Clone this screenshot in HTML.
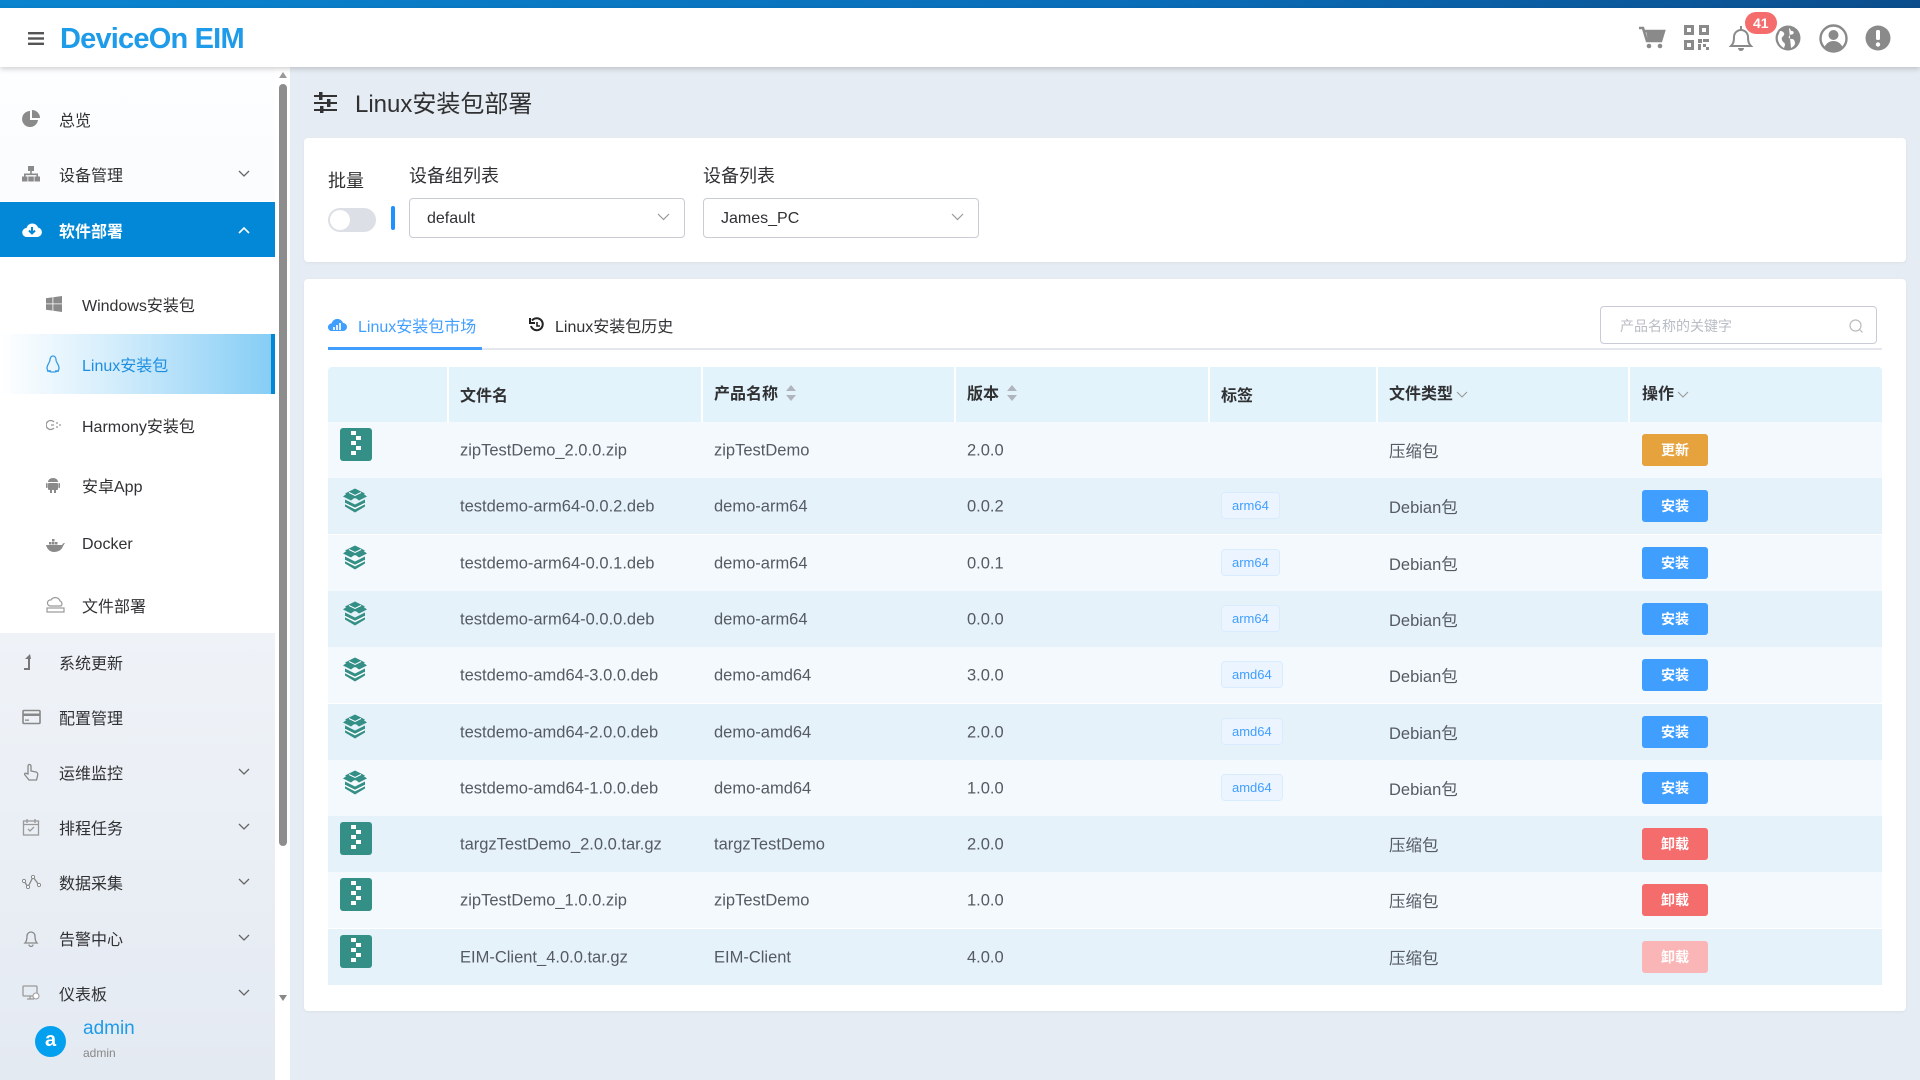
<!DOCTYPE html>
<html><head><meta charset="utf-8">
<style>
*{margin:0;padding:0;box-sizing:border-box}
body{width:1920px;height:1080px;overflow:hidden;background:#e6ecf3;font-family:"Liberation Sans","Noto Sans CJK SC",sans-serif;color:#303133;position:relative}
.a{position:absolute}
.topstrip{left:0;top:0;width:1920px;height:8px;background:linear-gradient(90deg,#0a84cf,#0a6db8 60%,#0b4d8c)}
.header{left:0;top:8px;width:1920px;height:59px;background:#fff;box-shadow:0 2px 5px rgba(0,0,0,.18);z-index:3}
.logo{left:60px;top:15px;font-size:29px;font-weight:bold;color:#1e9be9;letter-spacing:-0.8px}
.side{left:0;top:67px;width:275px;height:1013px;background:linear-gradient(180deg,#fdfeff,#e4eaf2)}
.mi{position:absolute;left:0;width:275px;height:55px;font-size:16px;color:#303133}
.mi span{position:absolute;left:59px;top:50%;transform:translateY(-50%)}
.mi svg.ic{position:absolute;left:22px;top:50%;transform:translateY(-50%)}
.mi .chev{position:absolute;left:238px;top:50%;transform:translateY(-50%)}
.sub span{left:82px}
.sub svg.ic{left:46px}
.card{background:#fff;border-radius:4px;box-shadow:0 1px 3px rgba(0,0,0,.05)}
.sel{border:1px solid #c9ccd3;border-radius:4px;height:40px;background:#fff;font-size:16px;color:#303133}
.sel span{position:absolute;left:17px;top:11px}
.sel svg{position:absolute;right:14px;top:14px}
.row{position:absolute;left:328px;width:1554px;height:56px;font-size:16.5px;color:#555a63}
.row .c{position:absolute;top:50%;transform:translateY(-50%)}
.tag{position:absolute;left:893px;top:14px;height:27px;padding:0 10px;line-height:25px;font-size:13px;color:#409eff;background:#ecf5ff;border:1px solid #d9ecff;border-radius:4px}
.btn{position:absolute;left:1314px;top:12px;width:66px;height:32px;border-radius:3px;color:#fff;font-size:14px;font-weight:bold;text-align:center;line-height:32px}
.th{position:absolute;top:0;height:55px;line-height:55px;font-weight:bold;font-size:16px;color:#303133}
</style></head><body>
<div class="a topstrip"></div>
<div class="a header">
  <svg class="a" style="left:28px;top:24px" width="16" height="13"><rect y="0" width="16" height="2.4" fill="#555"/><rect y="5.3" width="16" height="2.4" fill="#555"/><rect y="10.6" width="16" height="2.4" fill="#555"/></svg>
  <div class="a logo">DeviceOn EIM</div>
  <svg class="a" style="left:1638px;top:17px" width="28" height="26" viewBox="0 0 28 26"><path d="M1 3h4l4 13h14l3-10H7" fill="none" stroke="#8a8a8a" stroke-width="2.6"/><path d="M8 6h18l-3 10H10z" fill="#8a8a8a"/><circle cx="11" cy="21" r="2.3" fill="#8a8a8a"/><circle cx="22" cy="21" r="2.3" fill="#8a8a8a"/></svg>
  <svg class="a" style="left:1684px;top:17px" width="25" height="25" viewBox="0 0 25 25" fill="#8a8a8a"><path d="M0 0h10v10H0zM3 3v4h4V3zM15 0h10v10H15zM18 3v4h4V3zM0 15h10v10H0zM3 18v4h4v-4zM14 14h4v4h-4zM19 14h6v3h-6zM14 19h3v6h-3zM19 19h3v3h-3zM22 22h3v3h-3z"/></svg>
  <svg class="a" style="left:1727px;top:15px" width="28" height="30" viewBox="0 0 28 30"><path d="M4 23c2-2 3-4 3-9a7 7 0 0 1 14 0c0 5 1 7 3 9z" fill="none" stroke="#8a8a8a" stroke-width="2"/><path d="M11 25a3 3 0 0 0 6 0z" fill="#8a8a8a"/><rect x="13" y="3" width="2" height="4" fill="#8a8a8a"/></svg>
  <div class="a" style="left:1745px;top:4px;height:22px;padding:0 8px;border-radius:11px;background:#f56c6c;color:#fff;font-size:14px;font-weight:bold;line-height:22px">41</div>
  <svg class="a" style="left:1775px;top:17px" width="26" height="26" viewBox="0 0 26 26"><circle cx="13" cy="13" r="12.5" fill="#8a8a8a"/><path d="M5 6c3 0 5 2 4 4s-3 2-2 5 3 2 3 5l-1 3C5 21 2 16 3 11zM14 3c2 1 1 3 3 3s2 2 1 3-3 0-4 2 1 3 3 3 3 2 3 5c-1 2-2 3-4 4" fill="#fff"/></svg>
  <svg class="a" style="left:1819px;top:16px" width="29" height="29" viewBox="0 0 29 29"><circle cx="14.5" cy="14.5" r="13" fill="none" stroke="#8a8a8a" stroke-width="2.4"/><circle cx="14.5" cy="11" r="5" fill="#8a8a8a"/><path d="M5.5 23c2-4 5-6 9-6s7 2 9 6c-2 2-5 3.5-9 3.5s-7-1.5-9-3.5z" fill="#8a8a8a"/></svg>
  <svg class="a" style="left:1865px;top:17px" width="26" height="26" viewBox="0 0 26 26"><circle cx="13" cy="13" r="12.5" fill="#8a8a8a"/><rect x="11" y="5" width="4" height="10" rx="1.5" fill="#fff"/><circle cx="13" cy="19.5" r="2.2" fill="#fff"/></svg>
</div>

<div class="a side">
  <div style="position:absolute;left:0;top:134px;width:275px;height:432px;background:#fff"></div>
</div>
<div class="a" style="left:0;top:67px;width:275px;height:1013px">
  <div class="mi" style="top:24px"><svg class="ic" width="18" height="18" viewBox="0 0 18 18"><path d="M8 1a8 8 0 1 0 8 9H8z" fill="#8a8a8a"/><path d="M10 0v8h8a8 8 0 0 0-8-8z" fill="#8a8a8a"/></svg><span>总览</span></div>
  <div class="mi" style="top:79px"><svg class="ic" width="18" height="16" viewBox="0 0 18 16" fill="#8a8a8a"><rect x="6" y="0" width="6" height="5"/><rect x="8.2" y="5" width="1.6" height="3"/><rect x="2" y="7.5" width="14" height="1.6"/><rect x="2" y="7.5" width="1.6" height="3"/><rect x="14.4" y="7.5" width="1.6" height="3"/><rect x="0" y="10.5" width="5.5" height="5"/><rect x="6.3" y="10.5" width="5.5" height="5"/><rect x="12.5" y="10.5" width="5.5" height="5"/></svg><span>设备管理</span><svg class="chev" width="12" height="8"><path d="M1 1l5 5 5-5" fill="none" stroke="#666" stroke-width="1.3"/></svg></div>
  <div class="mi" style="top:135px;background:#0288d6;color:#fff;font-weight:bold"><svg class="ic" width="20" height="16" viewBox="0 0 20 16"><path d="M5 15a4.5 4.5 0 0 1-.5-9A6 6 0 0 1 16 5.5 4.8 4.8 0 0 1 15.5 15z" fill="#fff"/><path d="M10 5v6M7 8.5l3 3 3-3" stroke="#0288d6" stroke-width="2" fill="none"/></svg><span>软件部署</span><svg class="chev" width="12" height="8"><path d="M1 7l5-5 5 5" fill="none" stroke="#fff" stroke-width="1.6"/></svg></div>
  <div class="mi sub" style="top:209px"><svg class="ic" width="16" height="16" viewBox="0 0 16 16" fill="#8a8a8a"><path d="M0 2.2l6.5-.9v6.2H0zM7.3 1.2L16 0v7.5H7.3zM0 8.3h6.5v6.3L0 13.7zM7.3 8.3H16V16l-8.7-1.2z"/></svg><span>Windows安装包</span></div>
  <div class="mi sub" style="top:267px;height:60px;background:linear-gradient(90deg,#fff 0%,#d6eefc 40%,#86cdf5 100%);color:#1e8fe0;border-right:4px solid #0288d6"><svg class="ic" width="14" height="18" viewBox="0 0 14 18"><path d="M7 1c-2 0-3 2-3 4 0 2-3 5-3 8 0 3 2 4 6 4s6-1 6-4c0-3-3-6-3-8 0-2-1-4-3-4z" fill="none" stroke="#3a9be3" stroke-width="1.3"/><path d="M1 16h4M9 16h4" stroke="#3a9be3" stroke-width="1.5"/></svg><span>Linux安装包</span></div>
  <div class="mi sub" style="top:330px"><svg class="ic" width="16" height="12" viewBox="0 0 16 12"><path d="M8 3a4.5 4.5 0 1 0 0 6" fill="none" stroke="#999" stroke-width="1.3"/><path d="M5 6h3M10 4h2M10 8h2M13 6h2" stroke="#999" stroke-width="1.3"/></svg><span>Harmony安装包</span></div>
  <div class="mi sub" style="top:390px"><svg class="ic" width="14" height="16" viewBox="0 0 14 16" fill="#8a8a8a"><path d="M2 5a5 4 0 0 1 10 0z"/><rect x="2" y="6" width="10" height="7" rx="1"/><rect x="0" y="6" width="1.6" height="5" rx=".8"/><rect x="12.4" y="6" width="1.6" height="5" rx=".8"/><rect x="4" y="12" width="2" height="4"/><rect x="8" y="12" width="2" height="4"/></svg><span>安卓App</span></div>
  <div class="mi sub" style="top:450px"><svg class="ic" width="19" height="14" viewBox="0 0 19 14" fill="#8a8a8a"><path d="M0 7h16c1-2 2-2 3-2-1 1-1 2-2 3-1 4-5 6-9 6S1 11 0 7z"/><rect x="3" y="4" width="2.5" height="2.5"/><rect x="6" y="4" width="2.5" height="2.5"/><rect x="9" y="4" width="2.5" height="2.5"/><rect x="6" y="1" width="2.5" height="2.5"/></svg><span>Docker</span></div>
  <div class="mi sub" style="top:510px"><svg class="ic" width="19" height="16" viewBox="0 0 19 16"><path d="M4 9a3 3 0 0 1 1-6 5 5 0 0 1 9 1 3 3 0 0 1 1 5z" fill="none" stroke="#999" stroke-width="1.2"/><rect x="1" y="11" width="17" height="4" fill="none" stroke="#999" stroke-width="1.2"/></svg><span>文件部署</span></div>
  <div class="mi" style="top:567px"><svg class="ic" width="18" height="16" viewBox="0 0 18 16"><path d="M6 16V5H3l5-5 1 5H8v11z" fill="#777"/><rect x="2" y="14" width="6" height="2" fill="#777"/></svg><span>系统更新</span></div>
  <div class="mi" style="top:622px"><svg class="ic" width="19" height="15" viewBox="0 0 19 15"><rect x="1" y="1" width="17" height="13" rx="1" fill="none" stroke="#888" stroke-width="1.6"/><rect x="1" y="4" width="17" height="2.5" fill="#888"/><rect x="3" y="10" width="4" height="1.3" fill="#888"/></svg><span>配置管理</span></div>
  <div class="mi" style="top:677px"><svg class="ic" width="18" height="18" viewBox="0 0 18 18"><path d="M6 11V3a1.5 1.5 0 0 1 3 0v5l5 1c2 .5 2 2 1.5 4l-1 4H7l-4-5c-1-1 0-2.5 1.5-1.5z" fill="none" stroke="#888" stroke-width="1.3"/></svg><span>运维监控</span><svg class="chev" width="12" height="8"><path d="M1 1l5 5 5-5" fill="none" stroke="#666" stroke-width="1.3"/></svg></div>
  <div class="mi" style="top:732px"><svg class="ic" width="18" height="18" viewBox="0 0 18 18"><rect x="1.5" y="3" width="15" height="14" fill="none" stroke="#999" stroke-width="1.3"/><path d="M1.5 6.5h15M5 1v4M13 1v4M6 11l2 2 4-4" fill="none" stroke="#999" stroke-width="1.3"/></svg><span>排程任务</span><svg class="chev" width="12" height="8"><path d="M1 1l5 5 5-5" fill="none" stroke="#666" stroke-width="1.3"/></svg></div>
  <div class="mi" style="top:787px"><svg class="ic" width="19" height="14" viewBox="0 0 19 14"><path d="M2 6l4 6 5-10 6 8" fill="none" stroke="#888" stroke-width="1.3"/><circle cx="2" cy="6" r="1.6" fill="#fff" stroke="#888"/><circle cx="6" cy="12" r="1.6" fill="#fff" stroke="#888"/><circle cx="11" cy="2" r="1.6" fill="#fff" stroke="#888"/><circle cx="17" cy="10" r="1.6" fill="#fff" stroke="#888"/></svg><span>数据采集</span><svg class="chev" width="12" height="8"><path d="M1 1l5 5 5-5" fill="none" stroke="#666" stroke-width="1.3"/></svg></div>
  <div class="mi" style="top:843px"><svg class="ic" width="18" height="18" viewBox="0 0 18 18"><path d="M3 14c1.5-1.5 2-3 2-7a4 4 0 0 1 8 0c0 4 .5 5.5 2 7z" fill="none" stroke="#888" stroke-width="1.3"/><path d="M7 15.5a2 2 0 0 0 4 0" fill="none" stroke="#888" stroke-width="1.3"/></svg><span>告警中心</span><svg class="chev" width="12" height="8"><path d="M1 1l5 5 5-5" fill="none" stroke="#666" stroke-width="1.3"/></svg></div>
  <div class="mi" style="top:898px"><svg class="ic" width="18" height="16" viewBox="0 0 18 16"><rect x="1" y="1" width="14" height="10" rx="1" fill="none" stroke="#999" stroke-width="1.3"/><path d="M5 14h7M8 11v3" stroke="#999" stroke-width="1.3"/><circle cx="14" cy="11" r="3" fill="#fff" stroke="#999"/></svg><span>仪表板</span><svg class="chev" width="12" height="8"><path d="M1 1l5 5 5-5" fill="none" stroke="#666" stroke-width="1.3"/></svg></div>
  <div class="a" style="left:35px;top:959px;width:31px;height:31px;border-radius:50%;background:#03a0ef;color:#fff;font-size:20px;font-weight:bold;text-align:center;line-height:29px">a</div>
  <div class="a" style="left:83px;top:951px;font-size:19px;color:#1e9be9">admin</div>
  <div class="a" style="left:83px;top:979px;font-size:12px;color:#888">admin</div>
</div>
<div class="a" style="left:275px;top:67px;width:15px;height:1013px;background:#fff"></div>
<div class="a" style="left:279px;top:84px;width:8px;height:762px;border-radius:4px;background:#8d8d8d"></div>
<svg class="a" style="left:279px;top:72px" width="8" height="6"><path d="M0 6L4 0l4 6z" fill="#999"/></svg>
<svg class="a" style="left:279px;top:995px" width="8" height="6"><path d="M0 0l4 6 4-6z" fill="#888"/></svg>

<svg class="a" style="left:314px;top:92px" width="23" height="21" viewBox="0 0 23 21" fill="#333"><rect y="3" width="23" height="2"/><rect y="10" width="23" height="2"/><rect y="17" width="23" height="2"/><rect x="5" y="0" width="3.5" height="8"/><rect x="13" y="7" width="3.5" height="8"/><rect x="6" y="14" width="3.5" height="7"/></svg>
<div class="a" style="left:355px;top:84px;font-size:24px;color:#303133">Linux安装包部署</div>

<div class="a card" style="left:304px;top:138px;width:1602px;height:124px"></div>
<div class="a" style="left:328px;top:167px;font-size:18px">批量</div>
<div class="a" style="left:409px;top:162px;font-size:18px">设备组列表</div>
<div class="a" style="left:703px;top:162px;font-size:18px">设备列表</div>
<div class="a" style="left:328px;top:208px;width:48px;height:24px;border-radius:12px;background:#dcdfe6"><div style="position:absolute;left:2px;top:2px;width:20px;height:20px;border-radius:50%;background:#fff"></div></div>
<div class="a" style="left:391px;top:206px;width:4px;height:24px;background:#1e90ff;border-radius:2px"></div>
<div class="a sel" style="left:409px;top:198px;width:276px"><span>default</span><svg width="13" height="8"><path d="M1 1l5.5 5.5L12 1" fill="none" stroke="#999" stroke-width="1.2"/></svg></div>
<div class="a sel" style="left:703px;top:198px;width:276px"><span>James_PC</span><svg width="13" height="8"><path d="M1 1l5.5 5.5L12 1" fill="none" stroke="#999" stroke-width="1.2"/></svg></div>

<div class="a card" style="left:304px;top:279px;width:1602px;height:732px"></div>
<svg class="a" style="left:328px;top:316px" width="19" height="16" viewBox="0 0 19 16"><path d="M4 15a3.8 3.8 0 0 1-.5-7.6A6 6 0 0 1 15 7a4 4 0 0 1 0 8z" fill="#409eff"/><path d="M6 14v-3M9 14V9M12 14V7" stroke="#fff" stroke-width="1.7"/></svg>
<div class="a" style="left:358px;top:313px;font-size:16px;color:#409eff">Linux安装包市场</div>
<svg class="a" style="left:529px;top:317px" width="16" height="16" viewBox="0 0 16 16"><path d="M3 3.5A6 6 0 1 1 2 9" fill="none" stroke="#222" stroke-width="2"/><path d="M1 1v5h5" fill="none" stroke="#222" stroke-width="2"/><path d="M8 5v4h3" fill="none" stroke="#222" stroke-width="1.6"/></svg>
<div class="a" style="left:555px;top:313px;font-size:16px;color:#303133">Linux安装包历史</div>
<div class="a" style="left:328px;top:348px;width:1554px;height:2px;background:#e4e7ed"></div>
<div class="a" style="left:328px;top:347px;width:154px;height:3px;background:#409eff"></div>
<div class="a" style="left:1600px;top:306px;width:277px;height:38px;border:1px solid #c9ccd6;border-radius:4px;background:#fff"><span style="position:absolute;left:19px;top:9px;font-size:14px;color:#b8bcc4">产品名称的关键字</span><svg style="position:absolute;right:12px;top:12px" width="15" height="15"><circle cx="6.5" cy="6.5" r="5.5" fill="none" stroke="#bbb" stroke-width="1.2"/><path d="M10.5 10.5l3 3" stroke="#bbb" stroke-width="1.2"/></svg></div>

<div class="a" style="left:328px;top:367px;width:1554px;height:55px;background:#e3f3fc;border-radius:4px 4px 0 0">
  <div style="position:absolute;left:119px;top:0;width:2px;height:55px;background:#fff"></div>
  <div style="position:absolute;left:373px;top:0;width:2px;height:55px;background:#fff"></div>
  <div style="position:absolute;left:626px;top:0;width:2px;height:55px;background:#fff"></div>
  <div style="position:absolute;left:880px;top:0;width:2px;height:55px;background:#fff"></div>
  <div style="position:absolute;left:1048px;top:0;width:2px;height:55px;background:#fff"></div>
  <div style="position:absolute;left:1300px;top:0;width:2px;height:55px;background:#fff"></div>
  <div class="th" style="left:132px;top:2px">文件名</div>
  <div class="th" style="left:386px">产品名称 <svg width="10" height="16" style="vertical-align:-2px;margin-left:4px"><path d="M0 6l5-6 5 6zM0 10l5 6 5-6z" fill="#b0b4bc"/></svg></div>
  <div class="th" style="left:639px">版本 <svg width="10" height="16" style="vertical-align:-2px;margin-left:4px"><path d="M0 6l5-6 5 6zM0 10l5 6 5-6z" fill="#b0b4bc"/></svg></div>
  <div class="th" style="left:893px;top:2px">标签</div>
  <div class="th" style="left:1061px">文件类型<svg width="12" height="8" style="margin-left:3px"><path d="M1 1l5 5 5-5" fill="none" stroke="#999" stroke-width="1.1"/></svg></div>
  <div class="th" style="left:1314px">操作<svg width="12" height="8" style="margin-left:3px"><path d="M1 1l5 5 5-5" fill="none" stroke="#999" stroke-width="1.1"/></svg></div>
</div>

<div id="rows"></div>
<script>
var data=[
["zip","zipTestDemo_2.0.0.zip","zipTestDemo","2.0.0","","压缩包","更新","#e6a23c"],
["deb","testdemo-arm64-0.0.2.deb","demo-arm64","0.0.2","arm64","Debian包","安装","#409eff"],
["deb","testdemo-arm64-0.0.1.deb","demo-arm64","0.0.1","arm64","Debian包","安装","#409eff"],
["deb","testdemo-arm64-0.0.0.deb","demo-arm64","0.0.0","arm64","Debian包","安装","#409eff"],
["deb","testdemo-amd64-3.0.0.deb","demo-amd64","3.0.0","amd64","Debian包","安装","#409eff"],
["deb","testdemo-amd64-2.0.0.deb","demo-amd64","2.0.0","amd64","Debian包","安装","#409eff"],
["deb","testdemo-amd64-1.0.0.deb","demo-amd64","1.0.0","amd64","Debian包","安装","#409eff"],
["zip","targzTestDemo_2.0.0.tar.gz","targzTestDemo","2.0.0","","压缩包","卸载","#f56c6c"],
["zip","zipTestDemo_1.0.0.zip","zipTestDemo","1.0.0","","压缩包","卸载","#f56c6c"],
["zip","EIM-Client_4.0.0.tar.gz","EIM-Client","4.0.0","","压缩包","卸载","#fab6b6"]];
var zip='<svg width="32" height="33" viewBox="0 0 32 33"><rect width="32" height="33" rx="3" fill="#348f87"/><g fill="#fff"><rect x="11" y="3" width="5" height="4"/><rect x="16" y="8" width="5" height="4"/><rect x="11" y="13" width="5" height="4"/><rect x="16" y="18" width="5" height="4"/><rect x="11" y="23" width="5" height="4"/></g></svg>';
var deb='<svg width="26" height="26" viewBox="0 0 26 26"><path d="M13 1L3 6l10 5 10-5z" fill="#348f87"/><path d="M1 9l4-3 8 4-4 3zM25 9l-4-3-8 4 4 3z" fill="#348f87"/><path d="M3 12l10 5 10-5v7l-10 6-10-6z" fill="#348f87"/><path d="M3 16l10 5 10-5" stroke="#fff" stroke-width="1.5" fill="none"/><path d="M7 5l6 3 6-3" stroke="#fff" stroke-width="1" fill="none"/></svg>';
var h='';
data.forEach(function(d,i){
 var top=422+i*56.3;
 var bg=i%2==0?'#f4f9fd':'#e5f2f9';
 h+='<div class="row" style="top:'+top+'px;background:'+bg+'">'+
 '<div class="c" style="left:'+(d[0]=='zip'?12:14)+'px;margin-top:-3px">'+(d[0]=='zip'?zip:deb)+'</div>'+
 '<div class="c" style="left:132px;margin-top:1px">'+d[1]+'</div>'+
 '<div class="c" style="left:386px;margin-top:1px">'+d[2]+'</div>'+
 '<div class="c" style="left:639px;margin-top:1px">'+d[3]+'</div>'+
 (d[4]?'<div class="tag">'+d[4]+'</div>':'')+
 '<div class="c" style="left:1061px">'+d[5]+'</div>'+
 '<div class="btn" style="background:'+d[7]+'">'+d[6]+'</div></div>';
});
document.getElementById('rows').innerHTML=h;
</script>
</body></html>
